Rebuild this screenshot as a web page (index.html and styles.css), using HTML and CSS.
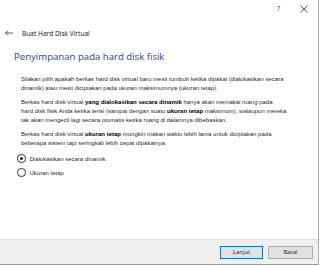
FILE: index.html
```html
<!DOCTYPE html>
<html lang="id">
<head>
  <meta charset="UTF-8">
  <title>Buat Hard Disk Virtual</title>
  <link rel="stylesheet" href="styles.css">
</head>
<body>

<div class="dialog">

  <!-- Title bar -->
  <div class="titlebar">
    <span class="help">?</span>
    <svg class="close" width="8" height="8" viewBox="0 0 8 8"><path d="M0.5 0.5 L7.5 7.5 M7.5 0.5 L0.5 7.5" stroke="#444" stroke-width="0.9" fill="none"/></svg>
  </div>

  <div class="wizard-head">
    <svg class="back" width="8" height="6" viewBox="0 0 8 6"><path d="M0.5 3 H8 M3 0.5 L0.5 3 L3 5.5" stroke="#333" stroke-width="0.8" fill="none"/></svg>
    <span>Buat Hard Disk Virtual</span>
  </div>

  <div class="content">
    <h1>Penyimpanan pada hard disk fisik</h1>

    <p>Silakan pilih apakah berkas hard disk virtual baru mesti tumbuh ketika dipakai (dialokasikan secara<br>
    dinamik) atau mesti diciptakan pada ukuran maksimumnya (ukuran tetap).</p>

    <p>Berkas hard disk virtual <b>yang dialokasikan secara dinamik</b> hanya akan memakai ruang pada<br>
    hard disk fisik Anda ketika terisi (sampai dengan suatu <b>ukuran tetap</b> maksimum), walaupun mereka<br>
    tak akan mengecil lagi secara otomatis ketika ruang di dalamnya dibebaskan.</p>

    <p>Berkas hard disk virtual <b>ukuran tetap</b> mungkin makan waktu lebih lama untuk diciptakan pada<br>
    beberapa sistem tapi seringkali lebih cepat dipakainya.</p>

    <div class="options">
      <label class="radio checked"><span class="dot"></span>Dialokasikan secara dinamik</label>
      <label class="radio"><span class="dot"></span>Ukuran tetap</label>
    </div>
  </div>

  <!-- Footer buttons -->
  <div class="footer">
    <button class="primary">Lanjut</button>
    <button>Batal</button>
  </div>

</div>

</body>
</html>
```

FILE: styles.css
```css
* { box-sizing: border-box; margin: 0; padding: 0; }
html, body { width: 320px; height: 266px; overflow: hidden; background: #fff; }
body { font-family: 'Liberation Sans', Arial, sans-serif; color: #222; }

.dialog {
  width: 319px; height: 265px; background: #fff;
  border-right: 1px solid #a9aec0; border-bottom: 1px solid #9a9a9a;
  display: flex; flex-direction: column;
}

.titlebar { height: 15px; display: flex; align-items: center; justify-content: flex-end; padding-right: 10px; gap: 20px; padding-top: 2px; }
.titlebar .help { font-family: 'Open Sans', sans-serif; font-size: 7px; color: #444; }

.wizard-head { display: flex; align-items: center; gap: 9px; padding: 11px 0 0 5px; height: 25px; }
.wizard-head span { font-family: 'Open Sans', sans-serif; font-size: 6.6px; color: #111; }

.content { flex: 1; padding: 10px 0 0 21px; }
.content h1 {
  font-family: 'Open Sans', sans-serif; font-weight: normal; font-size: 9.6px;
  color: #2341a2; margin-left: -7px; margin-bottom: 12px;
}
.content p { font-size: 6px; line-height: 9px; margin-bottom: 5px; white-space: nowrap; color: #2a2a2a; }
.content b { color: #000; }

.options { margin-top: 6px; display: flex; flex-direction: column; gap: 5px; }
.radio { display: flex; align-items: center; gap: 4px; font-size: 6px; height: 9px; margin-left: -4px; color: #2a2a2a; }
.radio .dot { width: 8.5px; height: 8.5px; border: 1px solid #333; border-radius: 50%; position: relative; }
.radio.checked .dot::after {
  content: ''; position: absolute; left: 1.6px; top: 1.6px; width: 3.3px; height: 3.3px;
  border-radius: 50%; background: #222;
}

.footer {
  height: 25px; background: #f0f0f0; border-top: 1px solid #dfdfdf;
  display: flex; justify-content: flex-end; align-items: center; gap: 5px; padding-right: 5px;
}
.footer button {
  width: 45px; height: 13px; background: #e1e1e1; border: 1px solid #adadad;
  font-family: 'Open Sans', sans-serif; font-size: 6px; color: #222;
}
.footer button.primary { width: 43px; border-color: #0078d7; }
```
